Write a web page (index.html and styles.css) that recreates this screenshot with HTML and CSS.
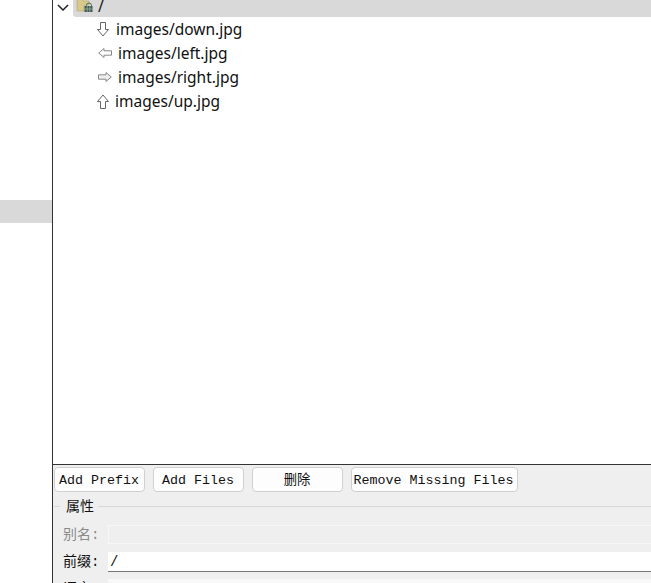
FILE: index.html
```html
<!DOCTYPE html>
<html lang="zh-CN">
<head>
<meta charset="utf-8">
<title>Resource Editor</title>
<link rel="stylesheet" href="styles.css">
</head>
<body>
<div class="app">
  <aside class="side"><div class="side-item"></div></aside>
  <main class="main">
    <section class="tree">
      <div class="root">
        <svg class="chevron" width="12" height="7" viewBox="0 0 12 7"><path d="M1 1l5 5 5-5" fill="none" stroke="#222" stroke-width="1.5"/></svg>
        <div class="root-row">
          <svg class="folder" width="17" height="14" viewBox="0 0 17 14">
            <path d="M1 0h5l1 2h6v4H8v6H1z" fill="#d9c98a" stroke="#b5a56a" stroke-width=".6"/>
            <path d="M10.500 6.500a2.500 2.500 0 0 1 5 0V8h-5z" fill="none" stroke="#4f6b5c" stroke-width="1"/>
            <rect x="8.500" y="7" width="8" height="6" fill="#3f5a50"/>
            <path d="M11.200 7v6M13.800 7v6M8.500 10h8" stroke="#a8bdb3" stroke-width=".7"/>
          </svg>
          <span class="root-label">/</span>
        </div>
      </div>
      <div class="file file-down">
        <svg class="icon" width="12" height="15" viewBox="0 0 12 15"><path d="M3.500.5h5v7h3L6 14 .5 7.500h3z" fill="#fff" stroke="#666"/></svg>
        <span>images/down.jpg</span>
      </div>
      <div class="file file-left">
        <svg class="icon" width="14" height="10" viewBox="0 0 14 10"><path d="M13.500 2.800v4.400H6v2.300L.7 5 6 .5v2.300z" fill="#fff" stroke="#888"/></svg>
        <span>images/left.jpg</span>
      </div>
      <div class="file file-right">
        <svg class="icon" width="14" height="10" viewBox="0 0 14 10"><path d="M.5 2.800v4.400H8v2.300L13.300 5 8 .5v2.300z" fill="#eee" stroke="#888"/></svg>
        <span>images/right.jpg</span>
      </div>
      <div class="file file-up">
        <svg class="icon" width="12" height="15" viewBox="0 0 12 15"><path d="M3.500 14.500h5v-7h3L6 1 .5 7.500h3z" fill="#fff" stroke="#666"/></svg>
        <span>images/up.jpg</span>
      </div>
    </section>
    <section class="panel">
      <div class="toolbar">
        <button class="btn">Add Prefix</button>
        <button class="btn">Add Files</button>
        <button class="btn">删除</button>
        <button class="btn btn-wide">Remove Missing Files</button>
      </div>
      <div class="group-title"><span>属性</span></div>
      <div class="form">
        <label class="label label-off">别名:</label>
        <div class="input input-off"></div>
        <label class="label">前缀:</label>
        <div class="input input-on">/</div>
        <label class="label">语言:</label>
        <div class="input input-plain"></div>
      </div>
    </section>
  </main>
</div>
</body>
</html>
```

FILE: styles.css
```css
* { box-sizing: border-box; }
html, body { margin: 0; height: 100%; overflow: hidden; background: #fff; }
.app { display: flex; height: 583px; overflow: hidden; }
.side { width: 52px; flex: none; padding-top: 200px; background: #fff; }
.side-item { height: 23px; background: #d9d9d9; }
.main { flex: 1; min-width: 0; display: flex; flex-direction: column; border-left: 1px solid #333; }
.tree { height: 464px; flex: none; background: #fff; font: 15.500px "Noto Sans", "Open Sans", sans-serif; color: #111; overflow: hidden; }
.root { display: flex; align-items: center; height: 25px; margin-top: -8px; padding-left: 4px; }
.chevron { flex: none; margin: 6px 4px 0 0; }
.root-row { flex: 1; height: 25px; display: flex; align-items: flex-end; padding: 0 0 1px 3px; background: #d9d9d9; border-bottom-left-radius: 3px; }
.folder { flex: none; margin-bottom: 3px; }
.root-label { margin-left: 5px; line-height: 20px; }
.file { display: flex; align-items: center; height: 24px; }
.file span { line-height: 24px; }
.file-down { padding-left: 44px; }
.file-down .icon { margin-right: 7px; }
.file-left, .file-right { padding-left: 45px; }
.file-left .icon, .file-right .icon { margin-right: 6px; }
.file-up { padding-left: 44px; }
.file-up .icon { margin-right: 6px; }
.panel { flex: 1; min-height: 0; background: #efefef; border-top: 1px solid #333; overflow: hidden; }
.toolbar { display: flex; gap: 8px; padding: 2px 0 0 1px; }
.btn { width: 91px; height: 25px; padding: 3px 1px 0 0; background: #fdfdfd; border: 1px solid #d0d0d0; border-radius: 4px; color: #111; font: 13.330px/20px "Liberation Mono", "Noto Sans CJK SC", monospace; }
.btn-wide { width: 167px; padding-right: 2px; }
.group-title { display: flex; align-items: center; height: 26px; margin: 1px 0 0 1px; font: 14px/24px "Noto Sans CJK SC", sans-serif; color: #111; }
.group-title::before { content: ""; width: 6px; height: 1px; background: #d8d8d8; }
.group-title::after { content: ""; flex: 1; height: 1px; background: #d8d8d8; }
.group-title span { padding: 0 4px 2px 6px; }
.form { display: grid; grid-template-columns: 55px 1fr; row-gap: 8px; margin-top: 6px; font: 14px/19px "Liberation Mono", "Noto Sans CJK SC", monospace; color: #111; }
.label { padding: 1px 0 0 10px; height: 19px; white-space: nowrap; }
.label-off { color: #8a8a8a; }
.input { height: 19px; margin-right: -3px; font: 14px/20px "Liberation Mono", monospace; padding-left: 2px; }
.input-off { background: #efefef; border: 1px solid #f7f7f7; }
.input-on { background: #fff; border-bottom: 1px solid #777; height: 20px; margin-bottom: -1px; }
.input-plain { background: #f8f8f8; }
```
